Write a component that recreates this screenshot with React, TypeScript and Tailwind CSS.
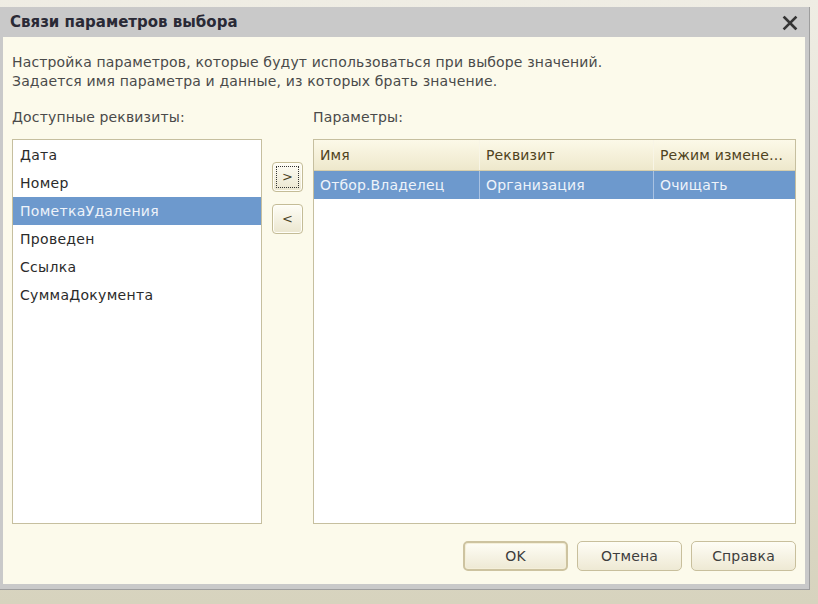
import React from "react";

const font = { fontFamily: '"DejaVu Sans", Verdana, sans-serif' };

function NavButton({ label, focused }: { label: string; focused?: boolean }) {
  return (
    <div className="w-[31px] h-[30px] rounded-[4px] border border-[#c4bc97] bg-gradient-to-b from-[#fefdf6] to-[#ebe6cf] flex items-center justify-center p-[3px] shadow-[inset_0_0_0_1px_#fffef8]">
      <div
        className={
          "w-full h-full flex items-center justify-center text-[13px] text-[#4a4224] " +
          (focused ? "border border-dotted border-[#333]" : "")
        }
      >
        {label}
      </div>
    </div>
  );
}

function DlgButton({ label, isDefault }: { label: string; isDefault?: boolean }) {
  return (
    <div
      className={
        "w-[105px] h-[30px] rounded-[5px] bg-gradient-to-b from-[#fefdf5] to-[#eee9d4] flex items-center justify-center text-[14px] text-[#3d3d3d] " +
        (isDefault
          ? "border-2 border-[#cdc3a0] shadow-[inset_0_0_0_1px_#f4efd9]"
          : "border border-[#c8bf9c]")
      }
    >
      {label}
    </div>
  );
}

export default function App() {
  const items = ["Дата", "Номер", "ПометкаУдаления", "Проведен", "Ссылка", "СуммаДокумента"];
  return (
    <div
      className="w-[818px] h-[604px] bg-gradient-to-b from-[#efede4] to-[#d7d3be] pt-[7px] overflow-hidden"
      style={font}
    >
      <div className="w-[810px] h-[583px] flex flex-col bg-[#c9c9c9] border-r border-b border-[#9e9e9e]">
        <div className="h-[30px] flex items-center justify-between pl-[10px] pr-[10px] pt-[1px] shrink-0">
          <span className="text-[15px] font-bold text-[#2a2a36]">Связи параметров выбора</span>
          <svg width="16" height="16" viewBox="0 0 16 16" className="mr-[1px]">
            <path d="M2.5 2.5 L13.5 13.5 M13.5 2.5 L2.5 13.5" stroke="#353535" strokeWidth="2.6" strokeLinecap="square" />
          </svg>
        </div>
        <div className="flex-1 ml-[3px] mr-[4px] mb-[5px] bg-[#fcfaeb] flex flex-col pl-[9px] pr-[9px] pt-[16px] pb-[13px] text-[14px] tracking-[0.15px] text-[#4a4a4a]">
          <div className="leading-[19px]">
            <div>Настройка параметров, которые будут использоваться при выборе значений.</div>
            <div>Задается имя параметра и данные, из которых брать значение.</div>
          </div>
          <div className="flex mt-[17px] leading-[19px]">
            <div className="w-[301px]">Доступные реквизиты:</div>
            <div>Параметры:</div>
          </div>
          <div className="flex mt-[12px] flex-1 min-h-0">
            <div className="w-[250px] border border-[#c6bf9f] bg-white pt-[1px] text-[#2b2b2b] tracking-[0.3px]">
              {items.map((it) => (
                <div
                  key={it}
                  className={
                    "h-[28px] flex items-center pl-[7px] " +
                    (it === "ПометкаУдаления" ? "bg-[#6d99cd] text-[#eef3fa]" : "")
                  }
                >
                  {it}
                </div>
              ))}
            </div>
            <div className="w-[51px] flex flex-col items-center pt-[23px] gap-[12px]">
              <NavButton label=">" focused />
              <NavButton label="<" />
            </div>
            <div className="flex-1 border border-[#c6bf9f] bg-white flex flex-col">
              <div className="h-[31px] flex bg-gradient-to-b from-[#fcf9e8] to-[#eee8cc] border-b border-[#d6ceac] text-[#4f4321]">
                <div className="w-[166px] flex items-center pl-[6px] border-r border-[#f8f5e6]">Имя</div>
                <div className="w-[174px] flex items-center pl-[6px] border-r border-[#f8f5e6]">Реквизит</div>
                <div className="flex-1 flex items-center pl-[6px] whitespace-nowrap overflow-hidden">Режим измене…</div>
              </div>
              <div className="h-[28px] flex bg-[#6d99cd] text-[#eef3fa]">
                <div className="w-[166px] flex items-center pl-[6px] border-r border-[#a9c2e2]">Отбор.Владелец</div>
                <div className="w-[174px] flex items-center pl-[6px] border-r border-[#a9c2e2]">Организация</div>
                <div className="flex-1 flex items-center pl-[6px]">Очищать</div>
              </div>
            </div>
          </div>
          <div className="flex justify-end gap-[9px] mt-[17px]">
            <DlgButton label="OK" isDefault />
            <DlgButton label="Отмена" />
            <DlgButton label="Справка" />
          </div>
        </div>
      </div>
    </div>
  );
}
